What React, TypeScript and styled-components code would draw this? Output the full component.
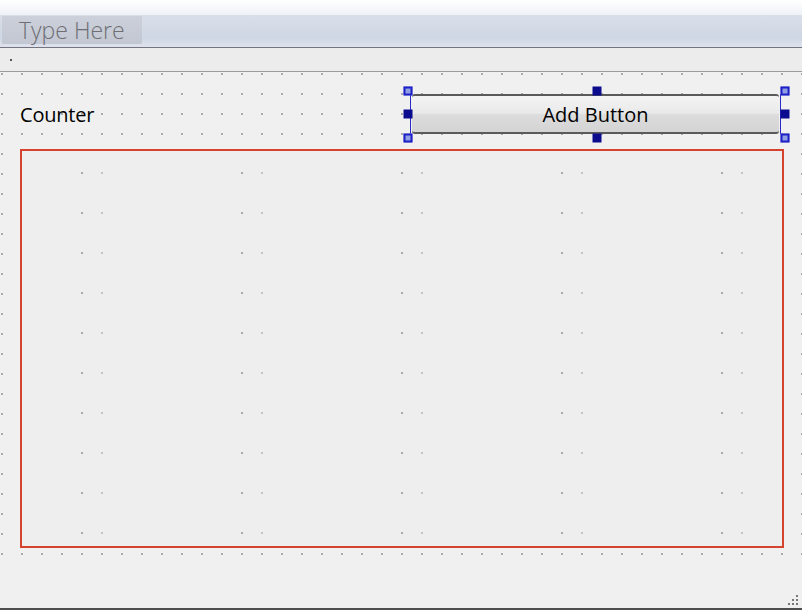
import React from "react";
import styled, { createGlobalStyle } from "styled-components";

const Global = createGlobalStyle`
  html, body {
    margin: 0;
    padding: 0;
    background: #f0f0f0;
  }
  * { box-sizing: border-box; }
`;

const Window = styled.div`
  width: 802px;
  height: 610px;
  display: flex;
  flex-direction: column;
  background: #f0f0f0;
  font-family: "Open Sans", "Noto Sans", sans-serif;
  overflow: hidden;
`;

const TopFade = styled.div`
  height: 15px;
  background: linear-gradient(#ffffff, #eef1f6);
`;

const MenuBar = styled.div`
  height: 33px;
  display: flex;
  align-items: stretch;
  padding: 1px 0 3px 2px;
  background: linear-gradient(#d9dfe9, #cfd7e4 70%, #dde2ee);
  border-bottom: 1px solid #74747c;
`;

const MenuItem = styled.div`
  width: 140px;
  display: flex;
  align-items: center;
  padding-left: 17px;
  font-size: 23px;
  font-weight: 300;
  color: #6e6e74;
  background: linear-gradient(#cbd0da, #c2c7d2);
`;

const ToolBar = styled.div`
  height: 24px;
  display: flex;
  align-items: center;
  padding-left: 10px;
  background: #ececec;
  border-bottom: 1px solid #9c9c9c;
`;

const ToolDot = styled.span`
  width: 2px;
  height: 2px;
  background: #555;
`;

const Form = styled.div`
  position: relative;
  flex: 1;
  display: flex;
  flex-direction: column;
  padding: 22px 0 0 20px;
  background-color: #f0f0f0;
  background-image: linear-gradient(#f0f0f0, #f0f0f0),
    radial-gradient(circle, #ababab 0.8px, transparent 1.2px);
  background-size: 100% 50px, 20px 20px;
  background-position: 0 100%, -8px -8px;
  background-repeat: no-repeat, repeat;
  border-bottom: 2px solid #4e4e4e;
`;

const TopRow = styled.div`
  display: flex;
  align-items: center;
  height: 40px;
`;

const Label = styled.div`
  width: 390px;
  font-size: 20px;
  color: #000;
  letter-spacing: -0.2px;
`;

const Selection = styled.div`
  position: relative;
  width: 371px;
  height: 40px;
  border-left: 1px solid #2a2ac8;
  border-right: 1px solid #2a2ac8;
  padding: 0 1px;
`;

const PushButton = styled.div`
  height: 100%;
  display: flex;
  align-items: center;
  justify-content: center;
  font-size: 20px;
  color: #000;
  border-top: 2px solid #5a5a5a;
  border-bottom: 2px solid #5a5a5a;
  border-radius: 3px;
  background: linear-gradient(#f4f4f4, #e9e9e9 48%, #dcdcdc 52%, #d4d4d4);
`;

const Handle = styled.span<{ $corner?: boolean }>`
  position: absolute;
  width: 9px;
  height: 9px;
  transform: translate(-50%, -50%);
  background: ${(p) => (p.$corner ? "#8f9fe2" : "#0b0b8e")};
  border: ${(p) => (p.$corner ? "2px solid #1f1fc8" : "none")};
`;

const ListBox = styled.div`
  margin-top: 15px;
  width: 764px;
  height: 399px;
  border: 2px solid #d5432e;
  background-color: #eeeeee;
  background-image: radial-gradient(circle, #a9a9a9 0.8px, transparent 1.2px),
    radial-gradient(circle, #c4c4c4 0.8px, transparent 1.2px);
  background-size: 160px 40px, 160px 40px;
  background-position: -20px 2px, 0px 2px;
`;

const Grip = styled.svg`
  position: absolute;
  right: 4px;
  bottom: 3px;
`;

const handles: { x: number; y: number; corner: boolean }[] = [
  { x: -3, y: -3, corner: true },
  { x: 186, y: -3, corner: false },
  { x: 374, y: -3, corner: true },
  { x: -3, y: 20, corner: false },
  { x: 374, y: 20, corner: false },
  { x: -3, y: 44, corner: true },
  { x: 186, y: 44, corner: false },
  { x: 374, y: 44, corner: true },
];

export default function App() {
  return (
    <>
      <Global />
      <Window>
        <TopFade />
        <MenuBar>
          <MenuItem>Type Here</MenuItem>
        </MenuBar>
        <ToolBar>
          <ToolDot />
        </ToolBar>
        <Form>
          <TopRow>
            <Label>Counter</Label>
            <Selection>
              <PushButton>Add Button</PushButton>
              {handles.map((h, i) => (
                <Handle key={i} $corner={h.corner} style={{ left: h.x, top: h.y }} />
              ))}
            </Selection>
          </TopRow>
          <ListBox />
          <Grip width="12" height="12" viewBox="0 0 12 12">
            {[
              [10, 2],
              [10, 6],
              [6, 6],
              [10, 10],
              [6, 10],
              [2, 10],
            ].map(([x, y], i) => (
              <rect key={i} x={x} y={y} width="2" height="2" fill="#777" />
            ))}
          </Grip>
        </Form>
      </Window>
    </>
  );
}
